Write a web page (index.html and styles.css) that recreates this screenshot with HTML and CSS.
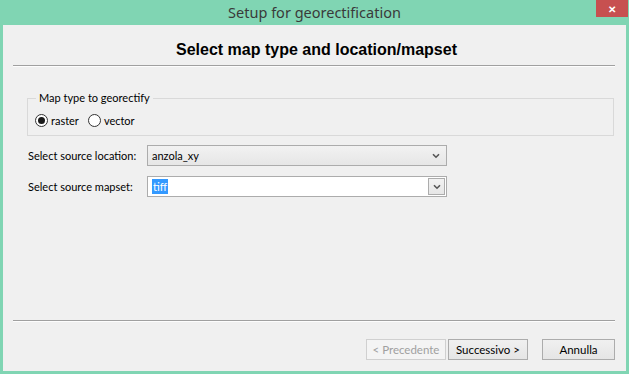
FILE: index.html
```html
<!DOCTYPE html>
<html lang="en">
  <head>
    <meta charset="UTF-8" />
    <title>Setup for georectification</title>
    <link rel="stylesheet" href="styles.css">
  </head>
  <body>
    <div class="window">
      <!-- Title bar -->
      <div class="titlebar">
        <span class="title">Setup for georectification</span>
        <span class="close">&#x2715;</span>
      </div>
      <!-- Client area -->
      <div class="client">
        <div class="header">
          <h1>Select map type and location/mapset</h1>
        </div>
        <div class="rule"></div>

        <fieldset class="group">
          <legend>Map type to georectify</legend>
          <div class="radios">
            <label class="radio-item"><span class="radio checked"></span>raster</label>
            <label class="radio-item"><span class="radio"></span>vector</label>
          </div>
        </fieldset>

        <div class="row first">
          <span class="row-label">Select source location:</span>
          <div class="combo">
            <span class="combo-text">anzola_xy</span>
            <svg class="chevron" width="8" height="6" viewBox="0 0 8 6"><path d="M1 1.2 L4 4.2 L7 1.2" fill="none" stroke="#555" stroke-width="1.6"/></svg>
          </div>
        </div>
        <div class="row">
          <span class="row-label">Select source mapset:</span>
          <div class="combo editable">
            <span class="combo-text"><span class="selected">tiff</span></span>
            <span class="drop-btn">
              <svg class="chevron" width="8" height="6" viewBox="0 0 8 6"><path d="M1 1.2 L4 4.2 L7 1.2" fill="none" stroke="#555" stroke-width="1.6"/></svg>
            </span>
          </div>
        </div>

        <div class="spacer"></div>
        <div class="rule bottom"></div>

        <div class="buttons">
          <button class="btn disabled">&lt; Precedente</button>
          <button class="btn">Successivo &gt;</button>
          <button class="btn cancel">Annulla</button>
        </div>
      </div>
    </div>
  </body>
</html>
```

FILE: styles.css
```css
/* Base */
* {
  margin: 0;
  padding: 0;
  box-sizing: border-box;
}

body {
  width: 629px;
  height: 374px;
  overflow: hidden;
  background: #80d5b3;
  font-family: Lato, "Noto Sans", sans-serif;
  font-size: 11px;
  color: #000;
}

.window {
  display: flex;
  flex-direction: column;
  height: 374px;
}

/* Title bar */
.titlebar {
  position: relative;
  height: 25px;
  display: flex;
  justify-content: center;
  align-items: center;
}

.title {
  font-family: "Noto Sans", sans-serif;
  font-size: 14.5px;
  color: #3a3a3a;
  margin-top: -1px;
}

.close {
  position: absolute;
  top: 0;
  right: 1px;
  width: 32px;
  height: 17px;
  background: #c75050;
  color: #fff;
  font-size: 10px;
  font-weight: bold;
  display: flex;
  justify-content: center;
  align-items: center;
}

/* Client */
.client {
  flex: 1;
  margin: 0 3px 3px 3px;
  background: #f0f0f0;
  display: flex;
  flex-direction: column;
}

.header {
  height: 40px;
  display: flex;
  justify-content: center;
  align-items: center;
  padding-top: 9px;
}

.header h1 {
  font-family: "Liberation Sans", Arial, sans-serif;
  font-size: 16px;
  font-weight: bold;
  padding-left: 4px;
}

.rule {
  height: 2px;
  margin: 0 11px 0 10px;
  border-top: 1px solid #a0a0a0;
  border-bottom: 1px solid #fdfdfd;
}

/* Group box */
.group {
  margin: 23px 12px 0 24px;
  border: 1px solid #d9d9d9;
  padding: 6px 8px 6px 7px;
}

.group legend {
  margin-left: 1px;
  padding: 0 3px;
  line-height: 16px;
}

.radios {
  display: flex;
  gap: 9px;
  height: 17px;
  align-items: center;
}

.radio-item {
  display: flex;
  align-items: center;
  gap: 3px;
}

.radio {
  width: 13px;
  height: 13px;
  border-radius: 50%;
  border: 1px solid #333;
  background: #fff;
  display: flex;
  justify-content: center;
  align-items: center;
}

.radio.checked::after {
  content: "";
  width: 7px;
  height: 7px;
  border-radius: 50%;
  background: #1a1a1a;
}

/* Form rows */
.row {
  display: flex;
  align-items: center;
  margin: 10px 0 0 25px;
}

.row.first {
  margin-top: 9px;
}

.row-label {
  width: 119px;
  flex-shrink: 0;
  white-space: nowrap;
}

.combo {
  width: 300px;
  height: 21px;
  border: 1px solid #acacac;
  background: linear-gradient(#f2f2f2, #e6e6e6);
  display: flex;
  align-items: center;
  justify-content: space-between;
  padding: 0 6px 0 4px;
}

.combo .chevron {
  display: block;
}

.combo.editable {
  background: #fff;
  padding: 0 1px 0 4px;
}

.selected {
  background: #3399ff;
  color: #fff;
  padding: 1px 1px;
}

.drop-btn {
  width: 17px;
  height: 17px;
  border: 1px solid #acacac;
  background: linear-gradient(#f2f2f2, #e6e6e6);
  display: flex;
  justify-content: center;
  align-items: center;
}

.spacer {
  flex: 1;
}

/* Buttons */
.buttons {
  display: flex;
  justify-content: flex-end;
  padding: 17px 11px 11px 0;
}

.btn {
  height: 21px;
  width: 80px;
  font-family: Lato, "Noto Sans", sans-serif;
  font-size: 11.5px;
  border: 1px solid #acacac;
  background: linear-gradient(#f0f0f0, #e5e5e5);
  color: #000;
  margin-left: 2px;
}

.btn.disabled {
  color: #a0a0a0;
  border-color: #d0d0d0;
  background: #f4f4f4;
}

.btn.cancel {
  width: 73px;
  margin-left: 14px;
}
```
